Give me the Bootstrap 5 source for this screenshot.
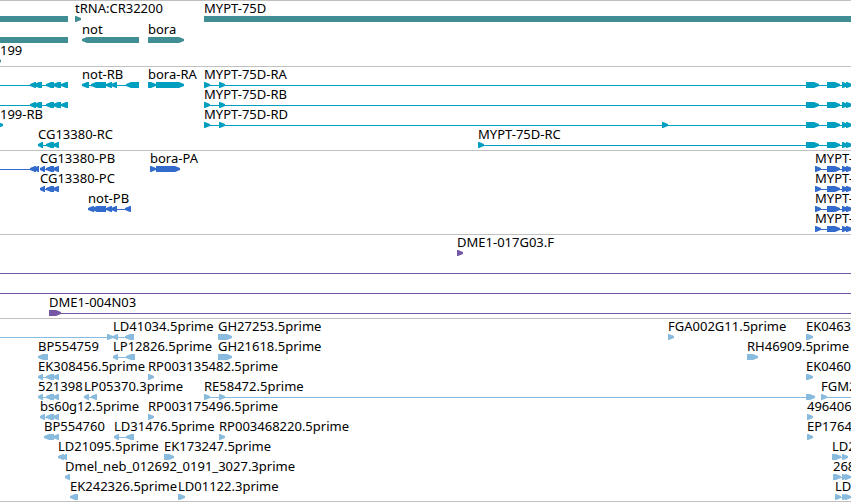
<!DOCTYPE html>
<html lang="en">
<head>
<meta charset="utf-8">
<meta name="viewport" content="width=device-width, initial-scale=1">
<title>Genome browser tracks</title>
<link rel="stylesheet" href="https://cdn.jsdelivr.net/npm/bootstrap@5.3.0/dist/css/bootstrap.min.css">
<style>
  body { font: 13px/10px "Noto Sans", "Open Sans", sans-serif; color: #000; }
  #browser { border-bottom: 1px solid #c0c0c0; }
  .track { border-top: 1px solid #c0c0c0; padding: 2px 0 1px; color: var(--ink); }
  .track-genes { --ink: #408e93; --row: 21px; padding-bottom: 0; }
  .track-transcripts { --ink: #009fbf; --row: 20px; }
  .track-proteins { --ink: #336bcc; --row: 20px; }
  .track-clones { --ink: #7557a5; --row: 20px; }
  .track-ests { --ink: #88bbdd; --row: 20px; padding-bottom: 0; }
  .track-row { height: var(--row); }
  .names { height: 13px; color: #000; }
  .feature-name { position: absolute; top: 0; white-space: nowrap; }
  .glyphs { height: 6px; fill: currentColor; }
</style>
</head>
<body class="bg-white">
<main id="browser" class="overflow-hidden"></main>

<script src="https://cdn.jsdelivr.net/npm/bootstrap@5.3.0/dist/js/bootstrap.bundle.min.js"></script>
<script>
// Feature: [name, start, exons, end of the connecting line]
// Exon: "start-end" followed by < or > (strand) or = (runs past the view)
const END = 9999;
const tail = "806-819> 827-840> 842-848> 846-852>";
const ptail = "827-840> 842-848> 846-852>";
const left = ["", 0, "30-36< 34-42< 46-54< 53-61< 61-68<", 68];
const mypt = n => [n, 204, "204-210> 219-225> " + tail, END];
const myptP = ["MYPT-", 815, "815-821> " + ptail, END];
const tracks = [
  ["genes", [
    [["", 0, "0-68="], ["tRNA:CR32200", 75, "75-81>"], ["MYPT-75D", 204, "204-9999="]],
    [["", 0, "0-68="], ["not", 82, "82-139<"], ["bora", 148, "148-184>"]],
    [["199", 0, "-5-1>"]]
  ]],
  ["transcripts", [
    [left, ["not-RB", 82, "82-89< 91-106< 106-112< 111-117< 126-139<", 139],
      ["bora-RA", 148, "148-156> 156-184>"], mypt("MYPT-75D-RA")],
    [left, mypt("MYPT-75D-RB")],
    [["199-RB", 0, "-3-3>"], mypt("MYPT-75D-RD"), ["", 662, "662-668>"]],
    [["CG13380-RC", 38, "38-43< 46-54< 53-59<", 59], ["MYPT-75D-RC", 478, "478-484> " + tail, END]]
  ]],
  ["proteins", [
    [["", 0, "30-36< 34-39<", 39], ["CG13380-PB", 40, "40-45< 46-54< 53-59<", 59],
      ["bora-PA", 150, "150-156> 156-180>"], myptP],
    [["CG13380-PC", 40, "40-45< 46-54< 53-59<", 59], myptP],
    [["not-PB", 88, "88-94< 92-106< 106-112< 111-117< 125-131<", 131], myptP],
    [myptP]
  ]],
  ["clones", [
    [["DME1-017G03.F", 457, "457-463>"]],
    [["", 0, "", END]],
    [["", 0, "", END]],
    [["DME1-004N03", 49, "49-61>", END]]
  ]],
  ["ests", [
    [["", 0, "107-113>", 112], ["LD41034.5prime", 113, "113-118< 125-134<", 134],
      ["GH27253.5prime", 218, "218-232>"], ["FGA002G11.5prime", 668, "668-674>"], ["EK0463", 806, "806-813>"]],
    [["BP554759", 38, "38-48<"], ["LP12826.5prime", 113, "113-118< 126-135<", 135],
      ["GH21618.5prime", 218, "218-232>"], ["RH46909.5prime", 747, "747-758>"]],
    [["EK308456.5prime", 38, "38-43< 46-54< 53-59<", 59], ["RP003135482.5prime", 148, "148-154>"],
      ["EK0460", 806, "806-813>"]],
    [["521398", 38, "38-43< 46-54< 53-59<", 59], ["LP05370.3prime", 84, "84-89< 91-97<", 97],
      ["RE58472.5prime", 204, "204-210> 219-225> 806-815>", 814], ["FGM2", 821, "821-827>", END]],
    [["bs60g12.5prime", 40, "40-45< 46-54< 53-59<", 59], ["RP003175496.5prime", 148, "148-154>"],
      ["496406", 807, "807-813>"]],
    [["BP554760", 44, "44-54< 53-59<", 59], ["LD31476.5prime", 114, "114-119< 126-134<", 134],
      ["RP003468220.5prime", 219, "219-225>"], ["EP1764", 807, "807-813>"]],
    [["LD21095.5prime", 58, "58-64< 62-67<"], ["EK173247.5prime", 164, "164-174>"],
      ["LD2", 832, "832-841> 842-848>", 847]],
    [["Dmel_neb_012692_0191_3027.3prime", 65, "65-70<"], ["268", 833, "833-841> 842-848> 845-851>", 850]],
    [["EK242326.5prime", 70, "70-78<"], ["LD01122.3prime", 178, "178-185>"],
      ["LD", 835, "835-841> 842-848> 845-851>", 851]]
  ]]
];

function exon(text) {
  const [, a, b, strand] = text.match(/^(-?\d+)-(\d+)(.)/);
  const s = +a, e = +b, head = Math.min(6, e - s) - 1;
  if (strand === "=") return `<path d="M${s} 0H${e}V6H${s}Z"/>`;
  return strand === ">"
    ? `<path d="M${s} 0H${e - head}L${e} 2V4L${e - head} 6H${s}Z"/>`
    : `<path d="M${e} 0H${s + head}L${s} 2V4L${s + head} 6H${e}Z"/>`;
}

document.getElementById("browser").innerHTML = tracks.map(([kind, rows]) =>
  `<section class="track track-${kind}">` + rows.map(row => {
    const names = row.filter(f => f[0]).map(f =>
      `<span class="feature-name" style="left:${f[1]}px">${f[0]}</span>`).join("");
    const glyphs = row.map(([, start, exons, end]) =>
      (end ? `<path d="M${start} 3H${end}V4H${start}Z"/>` : "") +
      exons.split(" ").filter(Boolean).map(exon).join("")).join("");
    return `<div class="track-row"><div class="names position-relative">${names}</div>` +
      `<svg class="glyphs d-block w-100" aria-hidden="true">${glyphs}</svg></div>`;
  }).join("") + "</section>").join("");
</script>
</body>
</html>
